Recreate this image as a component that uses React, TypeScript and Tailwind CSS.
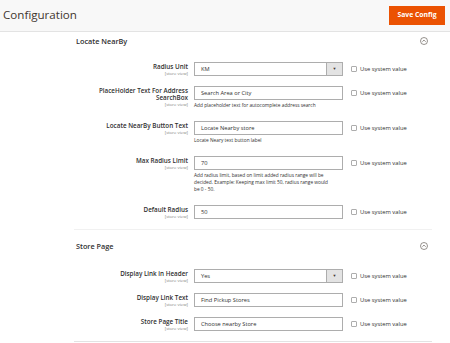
import React from "react";

const font = { fontFamily: '"Open Sans", "Liberation Sans", sans-serif' };

type Row = {
  label: string;
  value: string;
  select?: boolean;
  hint?: string;
};

const locateRows: Row[] = [
  { label: "Radius Unit", value: "KM", select: true },
  {
    label: "PlaceHolder Text For Address SearchBox",
    value: "Search Area or City",
    hint: "Add placeholder text for autocomplete address search",
  },
  {
    label: "Locate NearBy Button Text",
    value: "Locate Nearby store",
    hint: "Locate Neary text button label",
  },
  {
    label: "Max Radius Limit",
    value: "70",
    hint: "Add radius limit, based on limit added radius range will be decided. Example: Keeping max limit 50, radius range would be 0 - 50.",
  },
  { label: "Default Radius", value: "50" },
];

const storeRows: Row[] = [
  { label: "Display Link in Header", value: "Yes", select: true },
  { label: "Display Link Text", value: "Find Pickup Stores" },
  { label: "Store Page Title", value: "Choose nearby Store" },
];

function CollapseIcon() {
  return (
    <svg width="8" height="8" viewBox="0 0 16 16" className="mr-[4px]">
      <circle cx="8" cy="8" r="7" fill="none" stroke="#514943" strokeWidth="1.2" />
      <path d="M4.8 9.4 L8 6.2 L11.2 9.4" fill="none" stroke="#514943" strokeWidth="1.3" />
    </svg>
  );
}

function FieldRow({ row }: { row: Row }) {
  return (
    <div className={`flex items-start ${row.hint ? "mb-[12px]" : "mb-[10px]"}`}>
      <div className="w-[120px] pl-[14px] pr-[6px] pt-[1px] text-right">
        <div className="text-[6.3px] leading-[7px] font-semibold text-[#303030]">{row.label}</div>
        <div className="text-[4.3px] leading-[6px] text-[#808080]">[store view]</div>
      </div>
      <div className="w-[149px]">
        <div className="flex h-[14px] items-stretch border border-[#adadad] bg-white">
          <div className="flex flex-1 items-center pl-[6px] text-[5.7px] text-[#303030]">{row.value}</div>
          {row.select && (
            <div className="flex w-[16px] items-center justify-center border-l border-[#adadad] bg-[#e3e3e3] text-[4px] text-[#41362f]">
              ▼
            </div>
          )}
        </div>
        {row.hint && (
          <div className="mt-[2px] pr-[10px] text-[4.8px] leading-[7px] text-[#303030]">{row.hint}</div>
        )}
      </div>
      <div className="ml-[8px] flex h-[14px] items-center">
        <div className="h-[6px] w-[6px] rounded-[1px] border border-[#adadad] bg-white" />
        <span className="ml-[3px] text-[5.8px] text-[#303030]">Use system value</span>
      </div>
    </div>
  );
}

function SectionTitle({ title }: { title: string }) {
  return (
    <div className="flex h-[10px] items-center justify-between pl-[2px]">
      <span className="text-[7.3px] font-semibold text-[#303030]">{title}</span>
      <CollapseIcon />
    </div>
  );
}

export default function App() {
  return (
    <div style={font} className="h-[343px] w-[450px] overflow-hidden bg-white">
      <div className="flex h-[32px] items-center justify-between border-b border-[#e3e3e3] bg-[#f8f8f8] pl-[3px] pr-[5px]">
        <h1 className="mb-[1px] text-[11.6px] text-[#41362f]">Configuration</h1>
        <button className="h-[19px] w-[56px] bg-[#eb5202] text-[6.8px] font-bold text-white">
          Save Config
        </button>
      </div>

      <div className="ml-[74px] w-[358px]">
        <div className="pt-[4px]">
          <SectionTitle title="Locate NearBy" />
          <div className="mt-[16px]">
            {locateRows.map((r) => (
              <FieldRow key={r.label} row={r} />
            ))}
          </div>
        </div>

        <div className="border-t border-[#f1f1f1] pt-[11px]">
          <SectionTitle title="Store Page" />
          <div className="mt-[18px]">
            {storeRows.map((r) => (
              <FieldRow key={r.label} row={r} />
            ))}
          </div>
        </div>
        <div className="border-t border-[#e3e3e3]" />
      </div>
    </div>
  );
}
